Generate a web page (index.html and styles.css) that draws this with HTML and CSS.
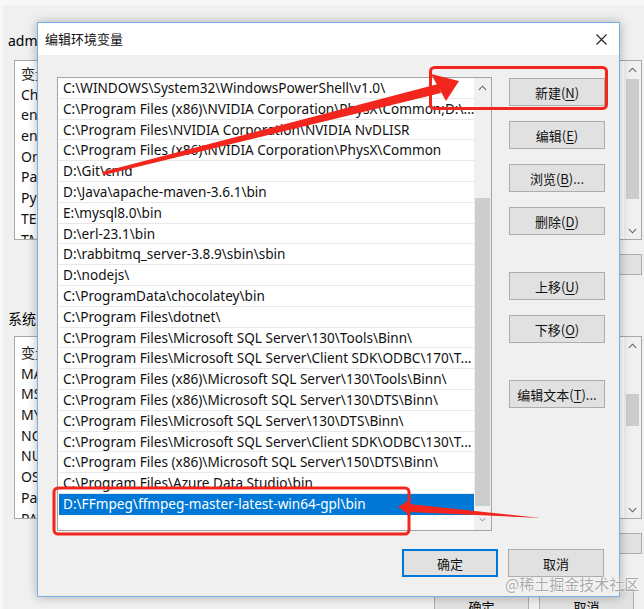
FILE: index.html
```html
<!DOCTYPE html>
<html lang="zh-CN">
<head>
<meta charset="utf-8">
<title>编辑环境变量</title>
<link rel="stylesheet" href="styles.css">
</head>
<body>
<div class="bgwin">
  <div class="bg-label first">administrator 的用户变量(U)</div>
  <div class="bg-list user">
    <div class="bg-rows">
      <div class="bg-row head">变量</div>
      <div class="bg-row">ChocolateyLastPathUpdate</div>
      <div class="bg-row">env</div>
      <div class="bg-row">env</div>
      <div class="bg-row">OneDrive</div>
      <div class="bg-row">Path</div>
      <div class="bg-row">PyCharm</div>
      <div class="bg-row">TEMP</div>
      <div class="bg-row">TMP</div>
    </div>
    <div class="bg-scroll">
      <div class="arr"><svg viewBox="0 0 10 6" width="9" height="6"><polyline points="1,5 5,1 9,5" fill="none" stroke="#606060" stroke-width="1.2"/></svg></div>
      <div class="bg-track"><div class="bg-thumb t1"></div></div>
      <div class="arr"><svg viewBox="0 0 10 6" width="9" height="6"><polyline points="1,1 5,5 9,1" fill="none" stroke="#606060" stroke-width="1.2"/></svg></div>
    </div>
  </div>
  <div class="bg-btnrow"><span class="bg-btn">新建(N)...</span><span class="bg-btn">编辑(E)...</span><span class="bg-btn">删除(D)</span></div>
  <div class="bg-label second">系统变量(S)</div>
  <div class="bg-list sys">
    <div class="bg-rows">
      <div class="bg-row head">变量</div>
      <div class="bg-row">MAVEN_HOME</div>
      <div class="bg-row">MSMPI_BIN</div>
      <div class="bg-row">MYSQL_HOME</div>
      <div class="bg-row">NODE_PATH</div>
      <div class="bg-row">NUMBER_OF_PROCESSORS</div>
      <div class="bg-row">OS</div>
      <div class="bg-row">Path</div>
      <div class="bg-row">PATHEXT</div>
    </div>
    <div class="bg-scroll">
      <div class="arr"><svg viewBox="0 0 10 6" width="9" height="6"><polyline points="1,5 5,1 9,5" fill="none" stroke="#606060" stroke-width="1.2"/></svg></div>
      <div class="bg-track"><div class="bg-thumb t2"></div></div>
      <div class="arr"><svg viewBox="0 0 10 6" width="9" height="6"><polyline points="1,1 5,5 9,1" fill="none" stroke="#606060" stroke-width="1.2"/></svg></div>
    </div>
  </div>
  <div class="bg-btnrow low"><span class="bg-btn">新建(W)...</span><span class="bg-btn">编辑(I)...</span><span class="bg-btn">删除(L)</span></div>
  <div class="bg-footer"><span class="bg-btn foot">确定</span><span class="bg-btn foot">取消</span></div>
</div>

<div class="dialog">
  <div class="titlebar">
    <span class="title">编辑环境变量</span>
    <svg class="close" viewBox="0 0 11 11" width="11" height="11"><path d="M0.5 0.5 L10.5 10.5 M10.5 0.5 L0.5 10.5" stroke="#222" stroke-width="1.1" fill="none"/></svg>
  </div>
  <div class="dbody">
    <div class="main">
      <div class="listbox">
        <div class="rows">
          <div class="row">C:\WINDOWS\System32\WindowsPowerShell\v1.0\</div>
          <div class="row">C:\Program Files (x86)\NVIDIA Corporation\PhysX\Common;D:\...</div>
          <div class="row">C:\Program Files\NVIDIA Corporation\NVIDIA NvDLISR</div>
          <div class="row">C:\Program Files (x86)\NVIDIA Corporation\PhysX\Common</div>
          <div class="row">D:\Git\cmd</div>
          <div class="row">D:\Java\apache-maven-3.6.1\bin</div>
          <div class="row">E:\mysql8.0\bin</div>
          <div class="row">D:\erl-23.1\bin</div>
          <div class="row">D:\rabbitmq_server-3.8.9\sbin\sbin</div>
          <div class="row">D:\nodejs\</div>
          <div class="row">C:\ProgramData\chocolatey\bin</div>
          <div class="row">C:\Program Files\dotnet\</div>
          <div class="row">C:\Program Files\Microsoft SQL Server\130\Tools\Binn\</div>
          <div class="row">C:\Program Files\Microsoft SQL Server\Client SDK\ODBC\170\T...</div>
          <div class="row">C:\Program Files (x86)\Microsoft SQL Server\130\Tools\Binn\</div>
          <div class="row">C:\Program Files (x86)\Microsoft SQL Server\130\DTS\Binn\</div>
          <div class="row">C:\Program Files\Microsoft SQL Server\130\DTS\Binn\</div>
          <div class="row">C:\Program Files\Microsoft SQL Server\Client SDK\ODBC\130\T...</div>
          <div class="row">C:\Program Files (x86)\Microsoft SQL Server\150\DTS\Binn\</div>
          <div class="row">C:\Program Files\Azure Data Studio\bin</div>
          <div class="row selected">D:\FFmpeg\ffmpeg-master-latest-win64-gpl\bin</div>
        </div>
        <div class="vscroll">
          <div class="arr up"><svg viewBox="0 0 10 6" width="9" height="6"><polyline points="1,5 5,1 9,5" fill="none" stroke="#606060" stroke-width="1.2"/></svg></div>
          <div class="track"><div class="thumb"></div></div>
          <div class="arr down"><svg viewBox="0 0 10 6" width="7" height="5"><polyline points="1,1 5,5 9,1" fill="none" stroke="#808080" stroke-width="1.4"/></svg></div>
        </div>
      </div>
      <div class="side">
        <div class="btn">新建(<u>N</u>)</div>
        <div class="btn">编辑(<u>E</u>)</div>
        <div class="btn">浏览(<u>B</u>)...</div>
        <div class="btn">删除(<u>D</u>)</div>
        <div class="btn gapped">上移(<u>U</u>)</div>
        <div class="btn">下移(<u>O</u>)</div>
        <div class="btn gapped">编辑文本(<u>T</u>)...</div>
      </div>
    </div>
    <div class="footer">
      <div class="btn default">确定</div>
      <div class="btn">取消</div>
    </div>
  </div>
</div>

<svg class="marks" viewBox="0 0 644 609" width="644" height="609">
  <rect x="430.5" y="67.5" width="176" height="41" rx="4" fill="none" stroke="#f2261c" stroke-width="3"/>
  <rect x="54" y="488" width="355" height="46" rx="4" fill="none" stroke="#f2261c" stroke-width="3"/>
  <polygon points="102,172 104,175 441,93 438,84" fill="#f2261c"/>
  <polygon points="431,74 459,81 446,101" fill="#f2261c"/>
  <polygon points="398,507 411,499 409,504 541,518 409,512 411,516" fill="#f2261c"/>
</svg>

<div class="watermark">@稀土掘金技术社区</div>
</body>
</html>
```

FILE: styles.css
```css
* { box-sizing: border-box; }

body {
  margin: 0;
  width: 644px;
  height: 609px;
  overflow: hidden;
  position: relative;
  background: #f8f8f8;
  font-family: "Noto Sans", "Noto Sans CJK SC", sans-serif;
  color: #000;
}

/* ---------- background window ---------- */
.bgwin {
  margin: 5px 0 0 3px;
  height: 604px;
  background: #f0f0f0;
  padding-left: 5px;
  display: flex;
  flex-direction: column;
}

.bg-label {
  font-size: 14px;
  line-height: 20px;
  height: 20px;
  white-space: nowrap;
}
.bg-label.first { margin-top: 26px; }
.bg-label.second { margin-top: 34px; }

.bg-list {
  margin-left: 6px;
  width: 628px;
  background: #fff;
  border: 1px solid #a9a9a9;
  display: flex;
}
.bg-list.user { margin-top: 9px; height: 180px; }
.bg-list.sys { margin-top: 7px; height: 183px; }

.bg-rows { flex: 1; overflow: hidden; padding-top: 3px; }
.bg-list.sys .bg-rows { padding-top: 6px; }
.bg-row {
  height: 20.7px;
  line-height: 20.7px;
  font-size: 14px;
  padding-left: 6px;
  white-space: nowrap;
  color: #111;
}
.bg-row.head { color: #222; }

.bg-scroll {
  width: 17px;
  background: #f0f0f0;
  display: flex;
  flex-direction: column;
}
.bg-scroll .arr {
  height: 17px;
  display: flex;
  align-items: center;
  justify-content: center;
}
.bg-track { flex: 1; }
.bg-thumb { background: #cdcdcd; margin: 0 2px; }
.bg-thumb.t1 { height: 120px; margin-top: 1px; }
.bg-thumb.t2 { height: 32px; margin-top: 40px; }

.bg-btnrow {
  margin-top: 14px;
  height: 30px;
  display: flex;
  justify-content: flex-end;
  gap: 10px;
  padding-right: 2px;
}
.bg-btnrow.low { margin-top: 14px; height: 24px; }
.bg-btn {
  width: 95px;
  background: #e1e1e1;
  border: 1px solid #adadad;
  font-size: 13px;
  display: flex;
  align-items: center;
  justify-content: center;
}
.bg-footer {
  margin-top: 35px;
  height: 26px;
  display: flex;
  gap: 10px;
  padding-left: 426px;
}
.bg-btn.foot { align-items: flex-start; padding-top: 7px; }

/* ---------- dialog ---------- */
.dialog {
  position: absolute;
  left: 37px;
  top: 22px;
  width: 583px;
  height: 575px;
  border: 1px solid #77aee6;
  background: #f0f0f0;
  box-shadow: 0 0 10px rgba(0, 0, 0, 0.28);
  display: flex;
  flex-direction: column;
}

.titlebar {
  height: 32px;
  background: #fff;
  display: flex;
  align-items: center;
  justify-content: space-between;
  padding: 0 12px 2px 7px;
  flex: none;
}
.title {
  font-family: "Noto Sans CJK SC", sans-serif;
  font-size: 13px;
  color: #111;
}
.close { margin-top: 2px; }

.dbody {
  flex: 1;
  padding: 22px 15px 0 19px;
  display: flex;
  flex-direction: column;
}

.main {
  display: flex;
  gap: 17px;
}

.listbox {
  width: 435px;
  height: 454px;
  background: #fff;
  border: 1px solid #a3a3a3;
  display: flex;
  flex: none;
}

.rows {
  flex: 1;
  overflow: hidden;
  padding-left: 1px;
}
.row {
  height: 20.8px;
  line-height: 20px;
  font-size: 13.6px;
  padding-left: 4px;
  white-space: nowrap;
  overflow: hidden;
  border-bottom: 1px solid #e8e8e8;
  color: #111;
}
.row.selected {
  background: #0078d7;
  color: #fff;
  border-bottom-color: #0078d7;
}

.vscroll {
  width: 17px;
  background: #f0f0f0;
  display: flex;
  flex-direction: column;
  flex: none;
}
.vscroll .arr {
  height: 20px;
  display: flex;
  align-items: center;
  justify-content: center;
  flex: none;
}
.vscroll .arr.down { height: 22px; }
.track { flex: 1; }
.thumb {
  margin: 100px 1px 0;
  height: 308px;
  background: #cdcdcd;
}

.side {
  display: flex;
  flex-direction: column;
  gap: 15px;
  padding-top: 1px;
}
.btn {
  width: 96px;
  height: 28px;
  background: #e1e1e1;
  border: 1px solid #adadad;
  font-family: "Noto Sans CJK SC", sans-serif;
  font-size: 13px;
  color: #111;
  display: flex;
  align-items: center;
  justify-content: center;
  white-space: nowrap;
}
.btn u { text-underline-offset: 2px; }
.btn.gapped { margin-top: 22px; }

.footer {
  margin-top: 18px;
  display: flex;
  justify-content: flex-end;
  gap: 10px;
}
.btn.default {
  border: 2px solid #0078d7;
}

/* ---------- overlays ---------- */
.marks {
  position: absolute;
  left: 0;
  top: 0;
  pointer-events: none;
}

.watermark {
  position: absolute;
  left: 505px;
  top: 573px;
  font-family: "Noto Sans CJK SC", sans-serif;
  font-size: 15px;
  color: rgba(140, 140, 140, 0.75);
  text-shadow: 0 0 2px #fff, 0 0 1px #fff;
  white-space: nowrap;
}
```
